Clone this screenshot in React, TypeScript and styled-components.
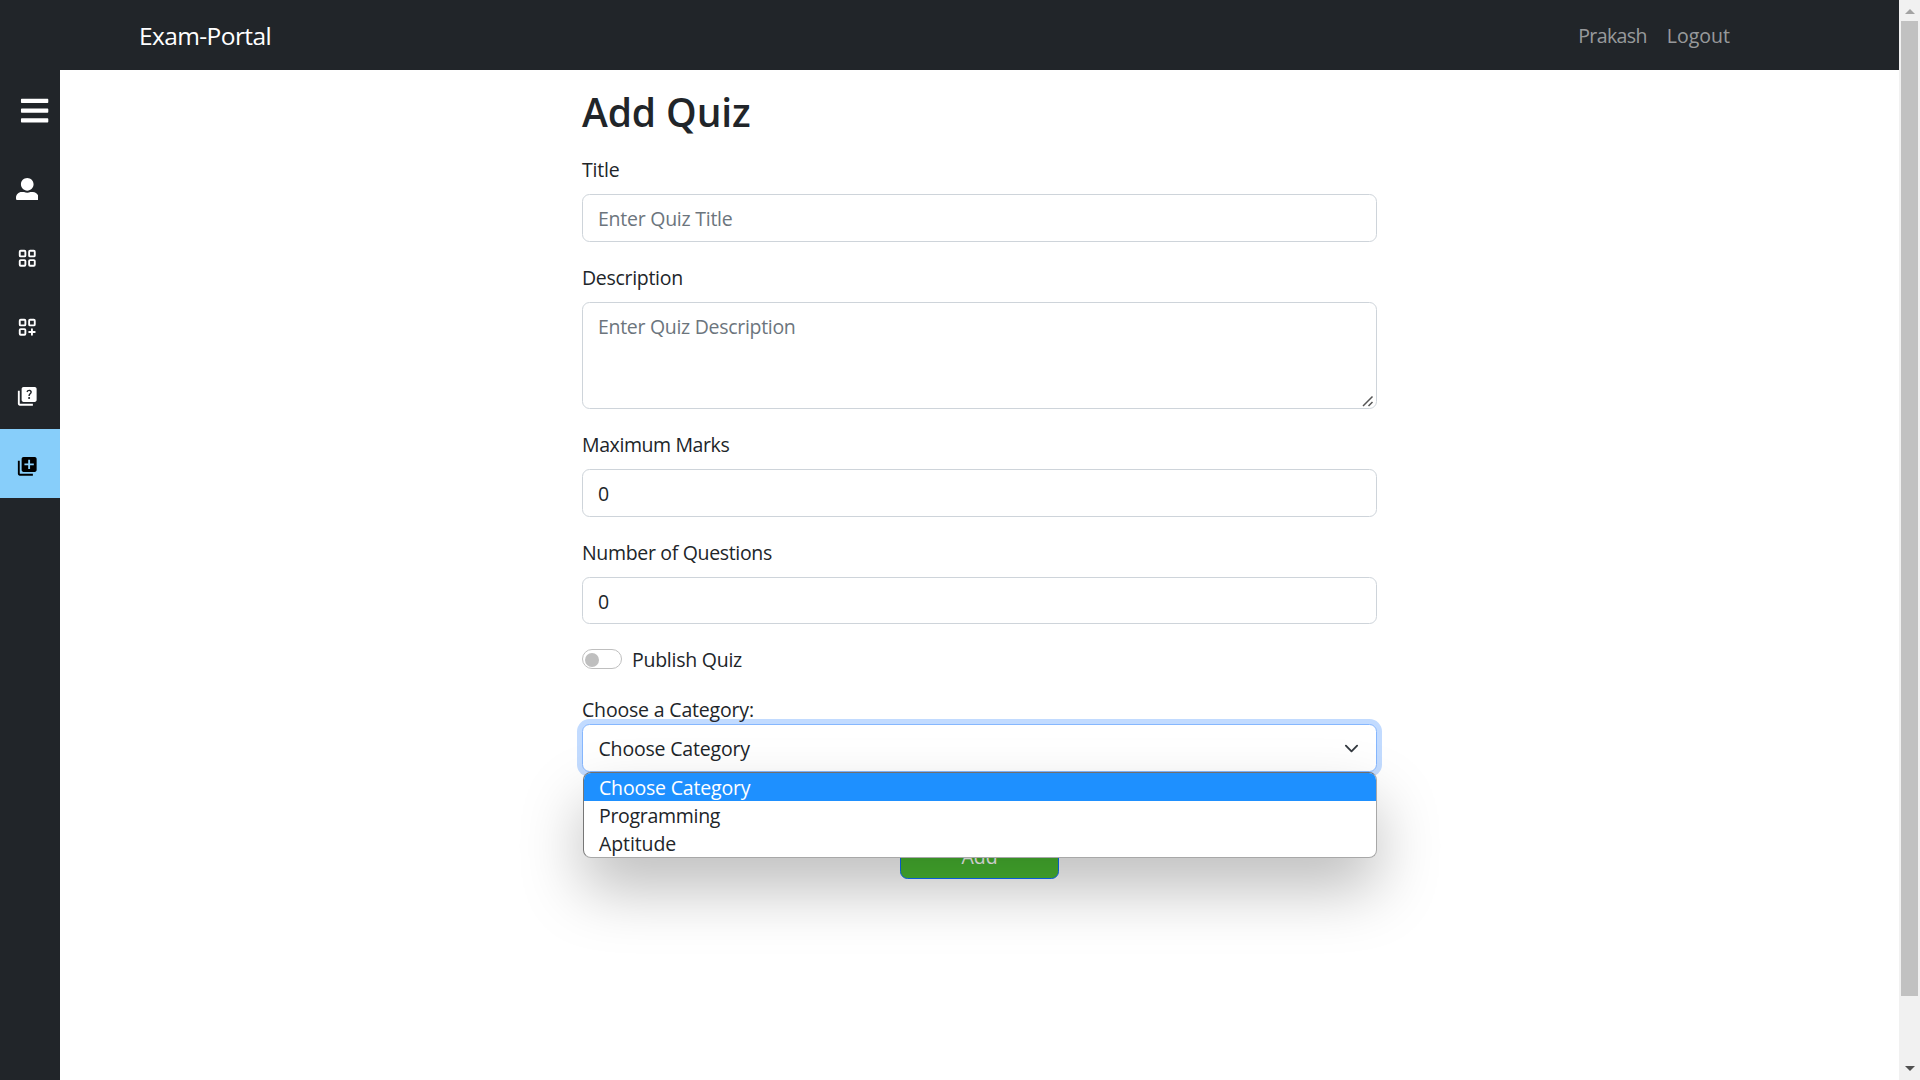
import React from 'react';
import styled, { createGlobalStyle, css } from 'styled-components';
import { FaBars, FaUserAlt } from 'react-icons/fa';
import { TbLayoutGrid, TbLayoutGridAdd } from 'react-icons/tb';
import { MdQuiz, MdLibraryAdd } from 'react-icons/md';

const GlobalStyle = createGlobalStyle`
  *, *::before, *::after { box-sizing: border-box; }
  body {
    margin: 0;
    overflow: hidden;
    background: #fff;
    color: #212529;
    font-family: "Open Sans", "Noto Sans", sans-serif;
    font-size: 19.5px;
    line-height: 30px;
  }
`;

const Window = styled.div`
  display: flex;
  width: 1920px;
  height: 1080px;
`;

const Page = styled.div`
  flex: 1;
  display: flex;
  flex-direction: column;
`;

const Navbar = styled.header`
  height: 70px;
  padding: 0 169px 0 139px;
  display: flex;
  align-items: center;
  justify-content: space-between;
  background: #212529;
`;

const Brand = styled.a`
  color: #fff;
  font-size: 24.5px;
  letter-spacing: -0.6px;
  padding-top: 1px;
`;

const NavLinks = styled.nav`
  display: flex;
  gap: 20px;
  padding-top: 2px;
`;

const NavLink = styled.a<{ $spacing: number }>`
  color: rgba(255, 255, 255, 0.55);
  letter-spacing: ${(p) => p.$spacing}px;
`;

const Body = styled.div`
  flex: 1;
  display: flex;
`;

const Sidebar = styled.aside`
  width: 60px;
  display: flex;
  flex-direction: column;
  background: #212529;
`;

const MenuToggle = styled.div`
  height: 82px;
  padding: 25px 0 0 19px;
  color: #fff;
  font-size: 31.25px;
  line-height: 0;
`;

const SideItem = styled.a<{ $active?: boolean }>`
  height: 69.2px;
  padding: 5px 0 0 15.75px;
  display: flex;
  align-items: center;
  font-size: 22.5px;
  color: ${(p) => (p.$active ? '#000' : '#fff')};
  background: ${(p) => (p.$active ? '#87cefa' : 'transparent')};
`;

const Main = styled.main`
  flex: 1;
  display: flex;
  justify-content: center;
`;

const Form = styled.form`
  width: 795px;
  display: flex;
  flex-direction: column;
`;

const Heading = styled.h2`
  margin: 18px 0 19px;
  height: 48px;
  font-size: 39px;
  font-weight: 600;
  line-height: 48px;
  letter-spacing: -0.1px;
`;

const Field = styled.div<{ $last?: boolean }>`
  position: relative;
  display: flex;
  flex-direction: column;
  margin-bottom: ${(p) => (p.$last ? 20 : 21)}px;
`;

const Label = styled.label<{ $spacing: number }>`
  margin-bottom: 9px;
  letter-spacing: ${(p) => p.$spacing}px;
`;

const control = css`
  display: block;
  width: 100%;
  border: 1px solid #ced4da;
  border-radius: 7.5px;
  background: #fff;
  color: #212529;
  font: inherit;
  outline: none;
  &::placeholder { color: #6c757d; opacity: 1; }
`;

const Input = styled.input<{ $height?: number }>`
  ${control}
  height: ${(p) => p.$height ?? 48}px;
  padding: ${(p) => (p.$height ? '9px 15px 7px' : '8px 15px')};
  letter-spacing: -0.25px;
`;

const TextArea = styled.textarea`
  ${control}
  height: 107px;
  padding: 9px 15px;
  resize: none;
  letter-spacing: -0.3px;
`;

const ResizeGrip = styled.svg`
  position: absolute;
  right: 3px;
  bottom: 2px;
`;

const SwitchRow = styled.div`
  height: 30px;
  margin: 0 0 21px;
  display: flex;
  align-items: center;
  gap: 10px;
`;

const Switch = styled.span`
  width: 40px;
  height: 20px;
  padding: 0 2px;
  display: flex;
  align-items: center;
  border: 1px solid #bfbfbf;
  border-radius: 10px;
  &::before {
    content: '';
    width: 14px;
    height: 14px;
    margin-top: 1px;
    border-radius: 50%;
    background: #bfbfbf;
  }
`;

const SwitchText = styled.span`
  padding-top: 2px;
  letter-spacing: -0.25px;
`;

const CategoryLabel = styled(Label)`
  position: relative;
  z-index: 1;
  margin-bottom: -1px;
`;

const SelectWrap = styled.div`
  position: relative;
`;

const SelectBox = styled.div`
  height: 48px;
  padding: 2px 17.5px 0 15.5px;
  display: flex;
  align-items: center;
  justify-content: space-between;
  border: 1px solid #86b7fe;
  border-radius: 7.5px;
  box-shadow: 0 0 0 5px #c2dbff;
  background: #fff;
  letter-spacing: -0.18px;
  svg { margin-top: -2px; }
`;

const Popup = styled.ul`
  position: absolute;
  z-index: 2;
  top: 48px;
  left: 1px;
  width: 794px;
  height: 86px;
  margin: 0;
  padding: 0;
  list-style: none;
  overflow: hidden;
  border: 1px solid #a8a8a8;
  border-top-color: #6f6f6f;
  border-left-color: #767676;
  border-radius: 8px;
  background: #fff;
  box-shadow: 0 31px 62px rgba(0, 0, 0, 0.26);
`;

const Option = styled.li<{ $selected?: boolean; $spacing: number }>`
  height: 28px;
  padding-left: 15px;
  line-height: 29px;
  letter-spacing: ${(p) => p.$spacing}px;
  color: ${(p) => (p.$selected ? '#fff' : '#212529')};
  background: ${(p) => (p.$selected ? '#1e90ff' : 'transparent')};
`;

const AddButton = styled.button`
  align-self: center;
  width: 159px;
  height: 48px;
  margin-top: 59px;
  padding: 3px 0 0;
  border: 1px solid #0d6efd;
  border-radius: 7.5px;
  background: #49b831;
  color: #fff;
  font: inherit;
`;

const Scrollbar = styled.div`
  width: 21px;
  padding: 9px 2px 9px;
  display: flex;
  flex-direction: column;
  align-items: center;
  background: #f1f1f1;
`;

const Arrow = styled.span<{ $down?: boolean }>`
  width: 0;
  height: 0;
  border: solid transparent;
  border-width: ${(p) => (p.$down ? '5px 5px 0' : '0 5px 5px')};
  ${(p) => (p.$down ? 'border-top-color: #505050' : 'border-bottom-color: #a3a3a3')};
`;

const Thumb = styled.div`
  width: 17px;
  height: 975px;
  margin: 7px 0 auto;
  background: #c1c1c1;
`;

export default function App() {
  return (
    <>
      <GlobalStyle />
      <Window>
        <Page>
          <Navbar>
            <Brand>Exam-Portal</Brand>
            <NavLinks>
              <NavLink $spacing={-0.6}>Prakash</NavLink>
              <NavLink $spacing={0}>Logout</NavLink>
            </NavLinks>
          </Navbar>
          <Body>
            <Sidebar>
              <MenuToggle><FaBars /></MenuToggle>
              <SideItem><FaUserAlt /></SideItem>
              <SideItem><TbLayoutGrid /></SideItem>
              <SideItem><TbLayoutGridAdd /></SideItem>
              <SideItem><MdQuiz /></SideItem>
              <SideItem $active><MdLibraryAdd /></SideItem>
            </Sidebar>
            <Main>
              <Form>
                <Heading>Add Quiz</Heading>
                <Field>
                  <Label $spacing={-0.2}>Title</Label>
                  <Input placeholder="Enter Quiz Title" />
                </Field>
                <Field>
                  <Label $spacing={-0.3}>Description</Label>
                  <TextArea placeholder="Enter Quiz Description" />
                  <ResizeGrip width="12" height="12" viewBox="0 0 12 12" stroke="#555" strokeWidth="1.5">
                    <path d="M1 11 10.5 1.5M6.5 11l4-4" fill="none" />
                  </ResizeGrip>
                </Field>
                <Field>
                  <Label $spacing={-0.4}>Maximum Marks</Label>
                  <Input defaultValue="0" />
                </Field>
                <Field $last>
                  <Label $spacing={-0.33}>Number of Questions</Label>
                  <Input defaultValue="0" $height={47} />
                </Field>
                <SwitchRow>
                  <Switch />
                  <SwitchText>Publish Quiz</SwitchText>
                </SwitchRow>
                <CategoryLabel $spacing={-0.18}>Choose a Category:</CategoryLabel>
                <SelectWrap>
                  <SelectBox>
                    Choose Category
                    <svg width="15" height="15" viewBox="0 0 16 16" fill="none" stroke="#343a40" strokeWidth="2" strokeLinecap="round" strokeLinejoin="round">
                      <path d="m2 5 6 6 6-6" />
                    </svg>
                  </SelectBox>
                  <Popup>
                    <Option $selected $spacing={-0.18}>Choose Category</Option>
                    <Option $spacing={-0.3}>Programming</Option>
                    <Option $spacing={-0.1}>Aptitude</Option>
                  </Popup>
                </SelectWrap>
                <AddButton type="button">Add</AddButton>
              </Form>
            </Main>
          </Body>
        </Page>
        <Scrollbar>
          <Arrow />
          <Thumb />
          <Arrow $down />
        </Scrollbar>
      </Window>
    </>
  );
}
